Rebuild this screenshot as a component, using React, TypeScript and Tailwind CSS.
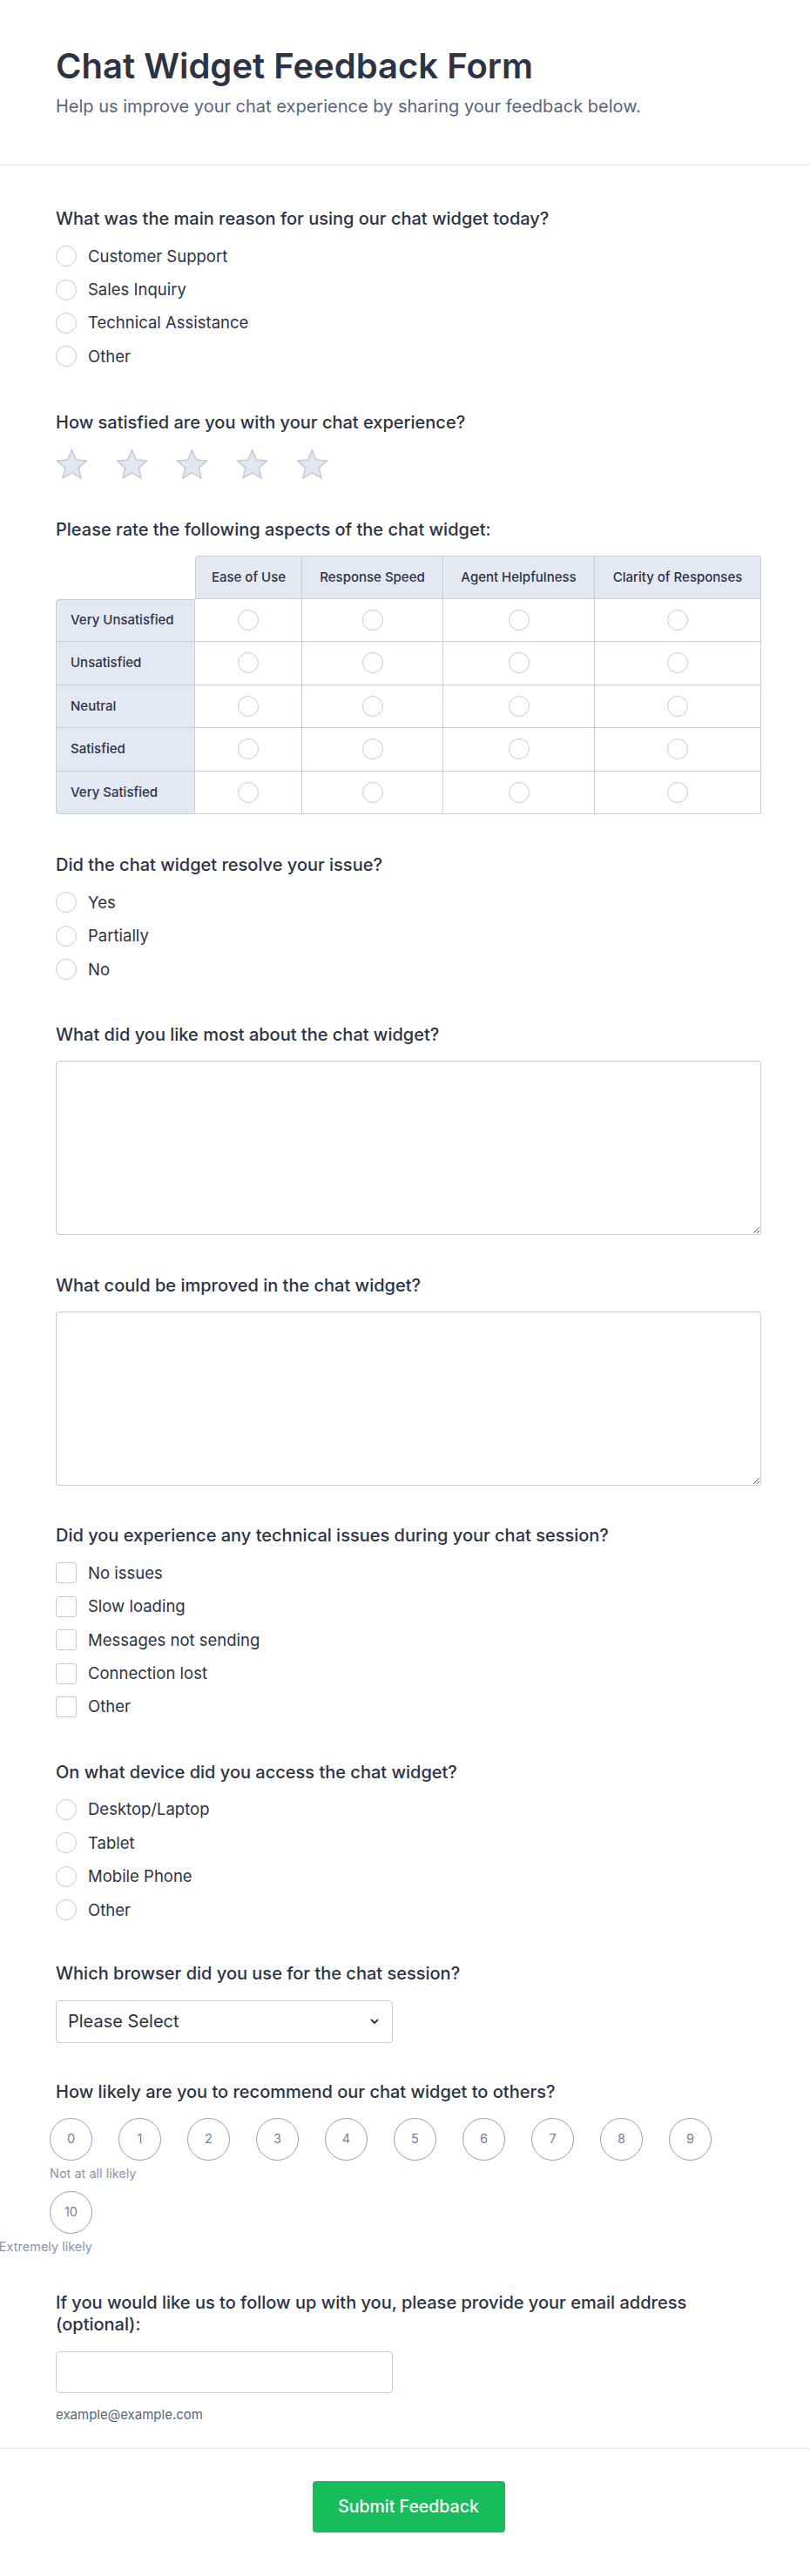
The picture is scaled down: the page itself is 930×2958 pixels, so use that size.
import React from "react";
import clsx from "clsx";

const cols = ["Ease of Use", "Response Speed", "Agent Helpfulness", "Clarity of Responses"];
const rows = ["Very Unsatisfied", "Unsatisfied", "Neutral", "Satisfied", "Very Satisfied"];

function Radio() {
  return <span className="block w-6 h-6 shrink-0 rounded-full border-[1.5px] border-[#c3cad8] bg-white" />;
}

function Checkbox() {
  return <span className="block w-6 h-6 shrink-0 rounded-[3px] border-[1.5px] border-[#c3cad8] bg-white" />;
}

function Label({ children }: { children: React.ReactNode }) {
  return <div className="text-[20px] leading-[25px] font-medium text-[#2c3345]">{children}</div>;
}

function Options({ items, type, className }: { items: string[]; type: "radio" | "check"; className?: string }) {
  return (
    <div className={clsx("flex flex-col", className)}>
      {items.map((t) => (
        <div key={t} className="flex h-[38.4px] items-center gap-[13px]">
          {type === "radio" ? <Radio /> : <Checkbox />}
          <span className="text-[18.5px] leading-[25px] text-[#2c3345]">{t}</span>
        </div>
      ))}
    </div>
  );
}

function Star() {
  const R = 18.5;
  const r = 8.4;
  const cx = 18.5;
  const cy = 19.2;
  const pts: string[] = [];
  for (let i = 0; i < 10; i++) {
    const ang = -Math.PI / 2 + (i * Math.PI) / 5;
    const rad = i % 2 === 0 ? R : r;
    pts.push(`${(cx + rad * Math.cos(ang)).toFixed(2)},${(cy + rad * Math.sin(ang)).toFixed(2)}`);
  }
  return (
    <svg width="37" height="34" viewBox="0 0 37 35" className="overflow-visible">
      <polygon points={pts.join(" ")} fill="#e3e7f1" stroke="#c3c9d7" strokeWidth="1.6" strokeLinejoin="round" />
    </svg>
  );
}

export default function App() {
  return (
    <div className="min-h-[2958px] bg-white font-['Inter',sans-serif] text-[#2c3345]">
      <header className="border-b border-[#dcdfe8] pl-16 pr-14 pt-[56px] pb-[53px]">
        <h1 className="text-[40px] leading-[40px] font-semibold text-[#2c3345]">Chat Widget Feedback Form</h1>
        <p className="mt-3 text-[20px] leading-[28px] text-[#57647e]">
          Help us improve your chat experience by sharing your feedback below.
        </p>
      </header>

      <main className="pl-16 pr-14 pb-[28px]">
        <section className="pt-[49px]">
          <Label>What was the main reason for using our chat widget today?</Label>
          <Options
            className="mt-[11px]"
            type="radio"
            items={["Customer Support", "Sales Inquiry", "Technical Assistance", "Other"]}
          />
        </section>

        <section className="mt-[44px]">
          <Label>How satisfied are you with your chat experience?</Label>
          <div className="mt-[18px] flex gap-[32px]">
            {[0, 1, 2, 3, 4].map((i) => (
              <Star key={i} />
            ))}
          </div>
        </section>

        <section className="mt-[46px]">
          <Label>Please rate the following aspects of the chat widget:</Label>
          <div className="mt-[17.5px] grid grid-cols-[160px_123px_162px_174px_191px] auto-rows-[49.5px] text-[15px] font-medium text-[#2c3345]">
            <div />
            {cols.map((c, i) => (
              <div
                key={c}
                className={clsx(
                  "flex items-center justify-center border-t border-r border-b border-[#c8cedb] bg-[#e4e8f3]",
                  i === 0 && "border-l rounded-tl-[4px]",
                  i === 3 && "rounded-tr-[4px]"
                )}
              >
                {c}
              </div>
            ))}
            {rows.map((r, ri) => (
              <React.Fragment key={r}>
                <div
                  className={clsx(
                    "flex items-center border-l border-r border-b border-[#c8cedb] bg-[#e4e8f3] pl-4",
                    ri === 0 && "border-t rounded-tl-[4px]",
                    ri === 4 && "rounded-bl-[4px]"
                  )}
                >
                  {r}
                </div>
                {cols.map((c, ci) => (
                  <div
                    key={c}
                    className={clsx(
                      "flex items-center justify-center border-r border-b border-[#c8cedb] bg-white",
                      ri === 4 && ci === 3 && "rounded-br-[4px]"
                    )}
                  >
                    <Radio />
                  </div>
                ))}
              </React.Fragment>
            ))}
          </div>
        </section>

        <section className="mt-[46px]">
          <Label>Did the chat widget resolve your issue?</Label>
          <Options className="mt-[11px]" type="radio" items={["Yes", "Partially", "No"]} />
        </section>

        <section className="mt-[44px]">
          <Label>What did you like most about the chat widget?</Label>
          <textarea
            readOnly
            className="mt-[16.5px] block h-[200px] w-full rounded-[4px] border border-[#c3cad8] bg-white"
          />
        </section>

        <section className="mt-[46.5px]">
          <Label>What could be improved in the chat widget?</Label>
          <textarea
            readOnly
            className="mt-[16.5px] block h-[200px] w-full rounded-[4px] border border-[#c3cad8] bg-white"
          />
        </section>

        <section className="mt-[45.5px]">
          <Label>Did you experience any technical issues during your chat session?</Label>
          <Options
            className="mt-[11px]"
            type="check"
            items={["No issues", "Slow loading", "Messages not sending", "Connection lost", "Other"]}
          />
        </section>

        <section className="mt-[43.5px]">
          <Label>On what device did you access the chat widget?</Label>
          <Options
            className="mt-[11px]"
            type="radio"
            items={["Desktop/Laptop", "Tablet", "Mobile Phone", "Other"]}
          />
        </section>

        <section className="mt-[42px]">
          <Label>Which browser did you use for the chat session?</Label>
          <div className="mt-[17.5px] flex h-[49px] w-[387px] items-center justify-between rounded-[4px] border border-[#c3cad8] bg-white pl-[13px] pr-[15px]">
            <span className="text-[20px] text-[#2c3345]">Please Select</span>
            <svg width="10" height="7" viewBox="0 0 10 7" fill="none">
              <path d="M1.5 1.5L5 5L8.5 1.5" stroke="#2c3345" strokeWidth="1.8" strokeLinecap="round" strokeLinejoin="round" />
            </svg>
          </div>
        </section>

        <section className="mt-[44px]">
          <Label>How likely are you to recommend our chat widget to others?</Label>
          <div className="mt-[17px] -ml-[7px] flex flex-wrap gap-x-[30px] gap-y-[10px]">
            {Array.from({ length: 11 }).map((_, i) => (
              <div key={i} className={clsx("flex w-[49px] flex-col", i === 10 ? "items-end" : "items-start")}>
                <span className="flex h-[49px] w-[49px] items-center justify-center rounded-full border border-[#959db0] text-[14.5px] text-[#76809a]">
                  {i}
                </span>
                {i === 0 && (
                  <span className="mt-[5px] whitespace-nowrap text-[14.5px] leading-[20px] text-[#8d95a8]">Not at all likely</span>
                )}
                {i === 10 && (
                  <span className="mt-[5px] whitespace-nowrap text-[14.5px] leading-[20px] text-[#8d95a8]">Extremely likely</span>
                )}
              </div>
            ))}
          </div>
        </section>

        <section className="mt-[42px]">
          <Label>If you would like us to follow up with you, please provide your email address (optional):</Label>
          <div className="mt-[18px] h-[48.5px] w-[387px] rounded-[4px] border border-[#c3cad8] bg-white" />
          <div className="mt-[15px] text-[15px] leading-[20px] text-[#57647e]">example@example.com</div>
        </section>
      </main>

      <footer className="border-t border-[#e3e6ed] pl-16 pr-14 pt-[37px] pb-[50px]">
        <div className="flex justify-center">
          <button className="h-[59px] w-[221px] rounded-[4px] bg-[#18bd5b] text-[19.5px] font-medium text-white">
            Submit Feedback
          </button>
        </div>
      </footer>
    </div>
  );
}
